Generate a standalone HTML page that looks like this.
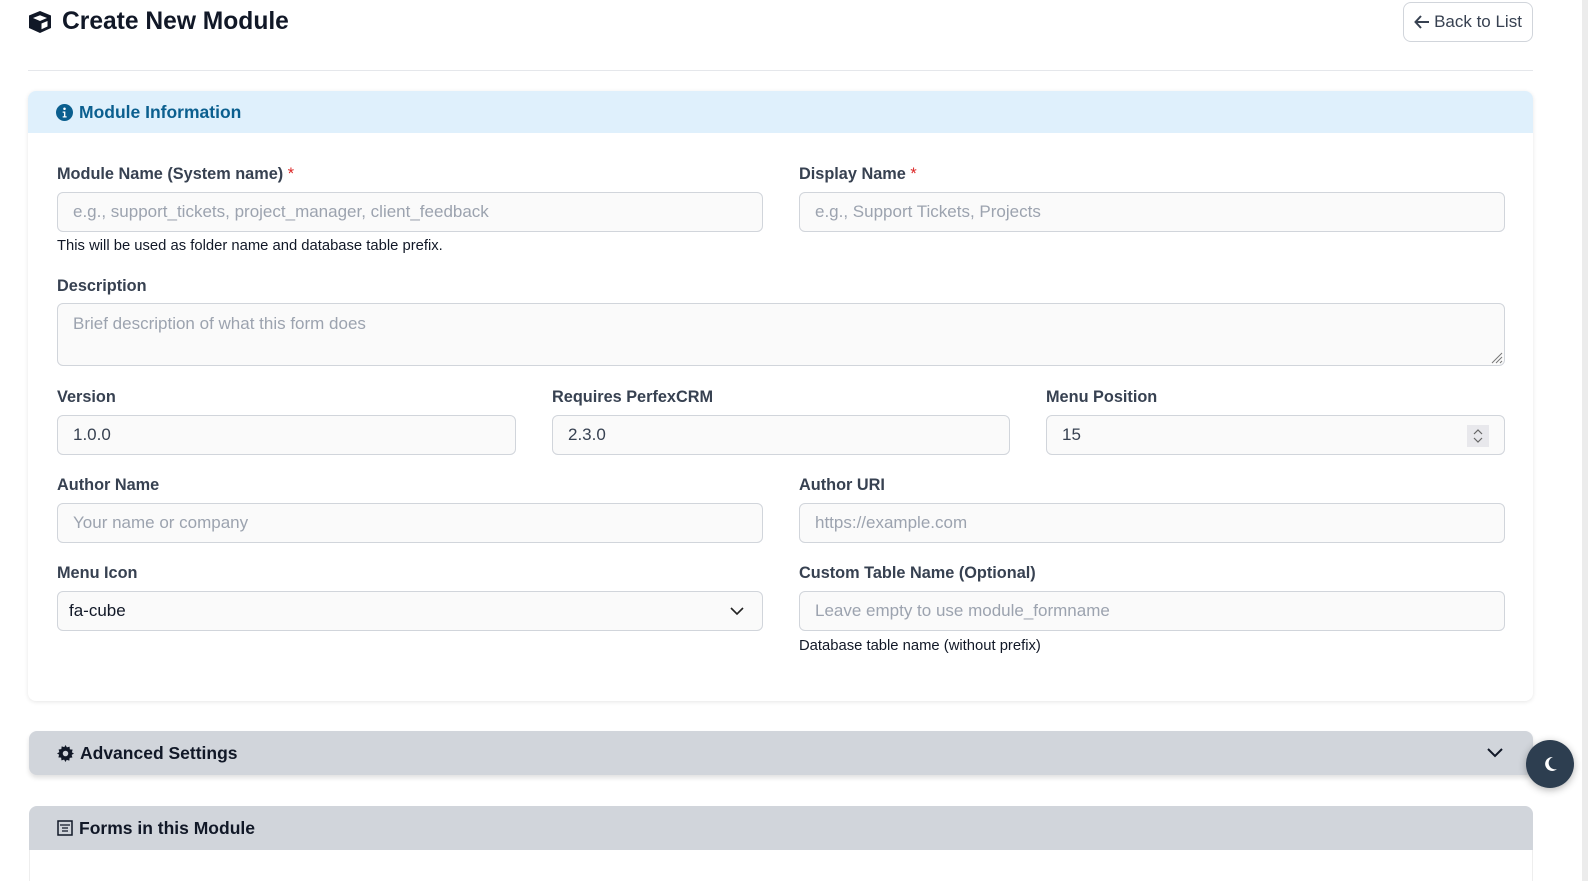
<!DOCTYPE html>
<html><head><meta charset="utf-8">
<style>
*{box-sizing:border-box;margin:0;padding:0}
body{width:1588px;height:881px;overflow:hidden;background:#fff;font-family:"Liberation Sans",sans-serif;color:#111827;position:relative}
.sb{position:absolute;right:0;top:0;width:6px;height:881px;background:#ececec}
h1{position:absolute;left:62px;top:8px;font-size:24.6px;font-weight:bold;color:#111827}
.cube{position:absolute;left:28px;top:10px}
.back{position:absolute;left:1403px;top:2px;width:130px;height:40px;border:1px solid #d1d5db;border-radius:8px;font-size:17px;color:#374151;display:flex;align-items:center;justify-content:center;gap:4px}
.hr{position:absolute;left:28px;top:70px;width:1505px;height:1px;background:#e5e7eb}
.card{position:absolute;left:28px;top:91px;width:1505px;height:610px;border-radius:8px;box-shadow:0 1px 4px rgba(0,0,0,.1);background:#fff;overflow:hidden}
.ch{height:42px;background:#dff0fc;display:flex;align-items:center;padding-left:28px;gap:6px;font-weight:bold;font-size:17.5px;color:#0b5f8f}
.l{position:absolute;font-size:16.3px;font-weight:bold;color:#374151;top:0}
.l b{color:#dc2626;font-weight:normal}
.i{position:absolute;height:40px;border:1px solid #d1d5db;border-radius:6px;background:#fafafa;font-size:17px;color:#9ca3af;padding-left:15px;display:flex;align-items:center}
.i.v{color:#374151}
.h{position:absolute;font-size:14.8px;color:#111827}
.bar{position:absolute;left:29px;width:1504px;height:44px;background:#d1d5db;border-radius:8px 8px 0 0;display:flex;align-items:center;padding-left:28px;gap:6px;font-weight:bold;font-size:17.5px;color:#111827}
.moon{position:absolute;left:1526px;top:740px;width:48px;height:48px;border-radius:50%;background:#2d3e50;box-shadow:0 2px 8px rgba(0,0,0,.3)}
</style></head><body>
<div class="sb"></div>
<svg class="cube" width="24" height="24" viewBox="0 0 24 24"><path d="M12 1 L23 5.5 V18 L12 23 L1 18 V5.5 Z" fill="#111827"/><path d="M5 8 L12 11 L19 8 L12 5.2 Z" fill="#fff"/><path d="M13.5 13.5 L19.5 11 V16.5 L13.5 19.2Z" fill="#fff"/></svg>
<h1>Create New Module</h1>
<div class="back"><svg width="16" height="14" viewBox="0 0 16 14"><path d="M7 1 L1.5 7 L7 13 M1.5 7 H15" stroke="#374151" stroke-width="2" fill="none"/></svg>Back to List</div>
<div class="hr"></div>
<div class="card"><div class="ch"><svg width="17" height="17" viewBox="0 0 16 16"><circle cx="8" cy="8" r="8" fill="#0b5f8f"/><circle cx="8" cy="4.5" r="1.2" fill="#fff"/><path d="M6.3 7h2.5v4.5h1.2v1.2H6.3v-1.2h1.2V8.2H6.3z" fill="#fff"/></svg>Module Information</div></div>
<div class="l" style="left:57px;top:165px">Module Name (System name) <b>*</b></div>
<div class="i" style="left:57px;top:192px;width:706px">e.g., support_tickets, project_manager, client_feedback</div>
<div class="h" style="left:57px;top:238px">This will be used as folder name and database table prefix.</div>
<div class="l" style="left:799px;top:165px">Display Name <b>*</b></div>
<div class="i" style="left:799px;top:192px;width:706px">e.g., Support Tickets, Projects</div>
<div class="l" style="left:57px;top:277px">Description</div>
<div class="i" style="left:57px;top:303px;width:1448px;height:63px;align-items:flex-start;padding-top:10px">Brief description of what this form does
<svg style="position:absolute;right:1px;bottom:1px" width="14" height="14"><path d="M13 3L3 13M13 7L7 13M13 11L11 13" stroke="#777" stroke-width="1"/></svg></div>
<div class="l" style="left:57px;top:388px">Version</div>
<div class="i v" style="left:57px;top:415px;width:459px">1.0.0</div>
<div class="l" style="left:552px;top:388px">Requires PerfexCRM</div>
<div class="i v" style="left:552px;top:415px;width:458px">2.3.0</div>
<div class="l" style="left:1046px;top:388px">Menu Position</div>
<div class="i v" style="left:1046px;top:415px;width:459px">15
<svg style="position:absolute;right:15px;top:9px" width="22" height="22"><rect width="22" height="22" fill="#e8e8ec"/><path d="M7 9l4-4 4 4M7 13l4 4 4-4" stroke="#666" fill="none" stroke-width="1.2"/></svg></div>
<div class="l" style="left:57px;top:476px">Author Name</div>
<div class="i" style="left:57px;top:503px;width:706px">Your name or company</div>
<div class="l" style="left:799px;top:476px">Author URI</div>
<div class="i" style="left:799px;top:503px;width:706px">https://example.com</div>
<div class="l" style="left:57px;top:564px">Menu Icon</div>
<div class="i v" style="left:57px;top:591px;width:706px;padding-left:11px;color:#111827">fa-cube
<svg style="position:absolute;right:18px;top:14px" width="14" height="10"><path d="M1 2l6 6 6-6" stroke="#222" stroke-width="1.6" fill="none"/></svg></div>
<div class="l" style="left:799px;top:564px">Custom Table Name (Optional)</div>
<div class="i" style="left:799px;top:591px;width:706px">Leave empty to use module_formname</div>
<div class="h" style="left:799px;top:638px">Database table name (without prefix)</div>
<div class="bar" style="top:731px;box-shadow:0 3px 5px rgba(0,0,0,.12);border-radius:8px"><svg width="17" height="17" viewBox="0 0 16 16"><path d="M8 0l1.3 2.2 2.5-.7.3 2.6 2.6.3-.7 2.5L16 8l-2.2 1.3.7 2.5-2.6.3-.3 2.6-2.5-.7L8 16l-1.3-2.2-2.5.7-.3-2.6-2.6-.3.7-2.5L0 8l2.2-1.3-.7-2.5 2.6-.3.3-2.6 2.5.7z" fill="#111827"/><circle cx="8" cy="8" r="2.6" fill="#d1d5db"/></svg>Advanced Settings
<svg style="position:absolute;right:30px;top:17px" width="16" height="10"><path d="M1 1l7 7 7-7" stroke="#111827" stroke-width="2" fill="none"/></svg></div>
<div class="bar" style="top:806px"><svg width="16" height="16" viewBox="0 0 16 16"><rect x="1" y="1" width="14" height="14" fill="none" stroke="#111827" stroke-width="1.5"/><path d="M3 5h10M5 8h6M5 11h6" stroke="#111827" stroke-width="1.3"/></svg>Forms in this Module</div>
<div style="position:absolute;left:29px;top:850px;width:1504px;height:31px;border-left:1px solid #eee;border-right:1px solid #eee"></div>
<div class="moon"><svg style="position:absolute;left:14px;top:14px" width="20" height="20" viewBox="0 0 20 20"><path d="M13 3a7 7 0 1 0 4 12A6 6 0 0 1 13 3z" fill="#fff"/></svg></div>
</body></html>
